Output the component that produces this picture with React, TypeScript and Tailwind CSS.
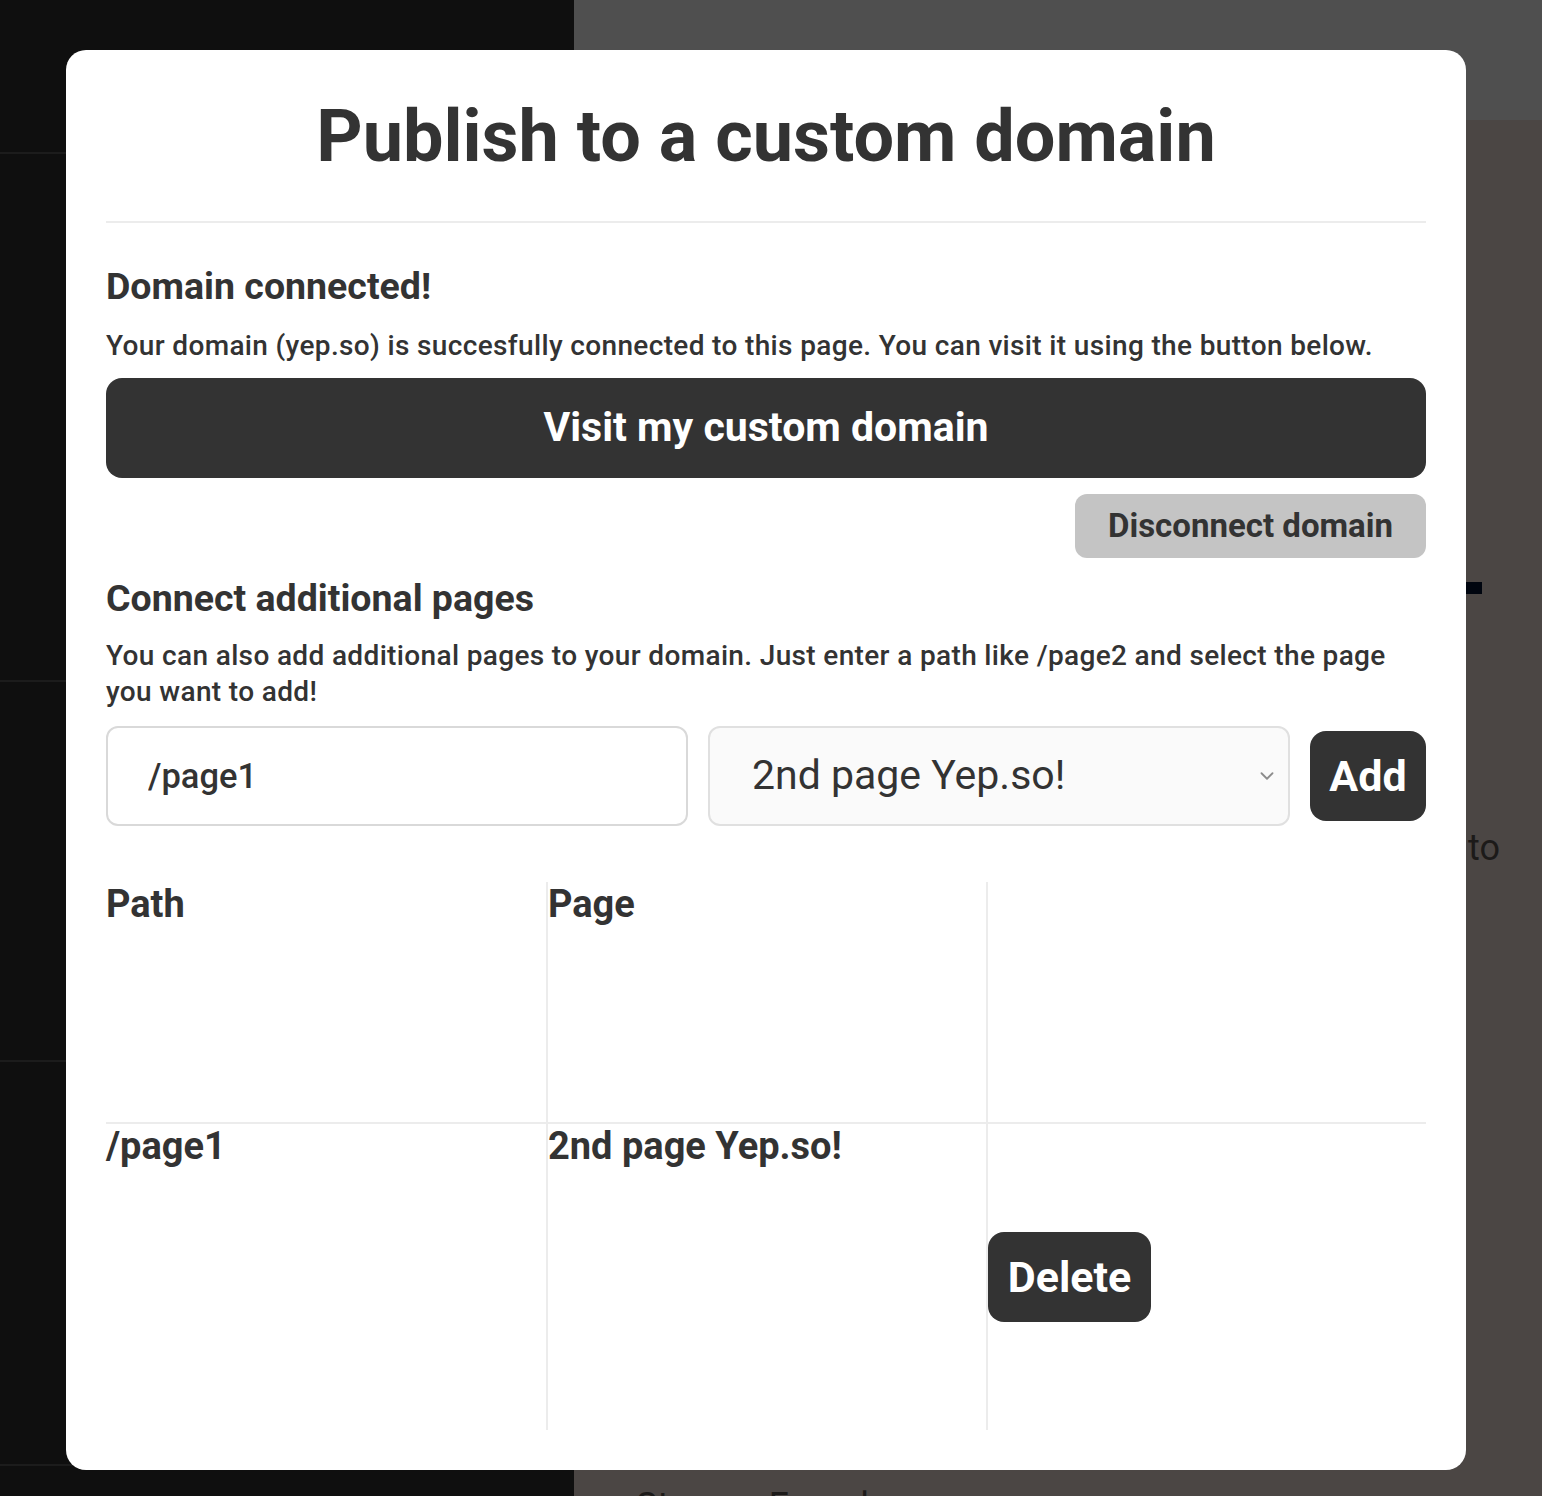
import { ChevronDown } from "lucide-react";

const rows = [
  { path: "/page1", page: "2nd page Yep.so!" },
];

export default function App() {
  return (
    <div className="relative flex h-[1496px] w-[1542px] overflow-hidden font-['Roboto','Liberation_Sans',sans-serif] text-[#333333]">
      <aside className="flex w-[574px] flex-col bg-[#0f0f0f]">
        <div className="h-[154px] border-b-2 border-[#1c1c1c]" />
        <div className="h-[528px] border-b-2 border-[#1c1c1c]" />
        <div className="h-[380px] border-b-2 border-[#1c1c1c]" />
        <div className="h-[404px] border-b-2 border-[#1c1c1c]" />
      </aside>

      <main className="flex flex-1 flex-col">
        <div className="h-[120px] bg-[#4f4f4f]" />
        <div className="flex flex-1 flex-col bg-[#4b4644]">
          <div className="ml-[892px] mt-[462px] h-[12px] w-[16px] bg-[#00050f]" />
          <p className="ml-[894px] mt-[234px] text-[36px] leading-[40px] text-[#1c1a19]">
            to
          </p>
          <p className="ml-[62px] mt-auto translate-y-[30px] text-[36px] leading-[40px] text-[#1c1a19]">
            Storage Foundry
          </p>
        </div>
      </main>

      <div className="absolute left-[66px] top-[50px] flex h-[1420px] w-[1400px] flex-col rounded-[20px] bg-white px-10 pt-[44px]">
        <h1 className="text-center text-[72px] font-bold leading-[86px]">
          Publish to a custom domain
        </h1>

        <div className="mt-[41px] h-[2px] bg-[#ececec]" />

        <h2 className="mt-[43px] text-[37.5px] font-bold leading-[40px]">
          Domain connected!
        </h2>
        <p className="mt-[22px] text-[28px] font-medium leading-[36px] tracking-[0.35px]">
          Your domain (yep.so) is succesfully connected to this page. You can
          visit it using the button below.
        </p>

        <button
          type="button"
          className="mt-[14px] h-[100px] rounded-[16px] bg-[#333333] text-[41px] font-bold text-white"
        >
          Visit my custom domain
        </button>

        <div className="mt-[16px] flex justify-end">
          <button
            type="button"
            className="h-[64px] w-[351px] rounded-[12px] bg-[#c4c4c4] text-[33px] font-bold text-[#333333]"
          >
            Disconnect domain
          </button>
        </div>

        <h2 className="mt-[20px] text-[37.5px] font-bold leading-[40px]">
          Connect additional pages
        </h2>
        <p className="mt-[20px] text-[28px] font-medium leading-[36px] tracking-[0.35px]">
          You can also add additional pages to your domain. Just enter a path
          like /page2 and select the page you want to add!
        </p>

        <div className="mt-[16px] flex items-center gap-5">
          <input
            defaultValue="/page1"
            className="h-[100px] w-[582px] rounded-[12px] border-2 border-[#d9d9d9] bg-white pl-[40px] text-[34.5px] font-medium text-[#333333] outline-none"
          />
          <div className="relative">
            <select
              defaultValue="2nd"
              className="h-[100px] w-[582px] appearance-none rounded-[12px] border-2 border-[#e0e0e0] bg-[#fafafa] pl-[42px] text-[41px] text-[#333333] outline-none"
            >
              <option value="2nd">2nd page Yep.so!</option>
            </select>
            <ChevronDown
              size={22}
              strokeWidth={2}
              className="pointer-events-none absolute right-[12px] top-[39px] text-[#8c8c8c]"
            />
          </div>
          <button
            type="button"
            className="h-[90px] w-[116px] rounded-[16px] bg-[#333333] text-[43px] font-bold text-white"
          >
            Add
          </button>
        </div>

        <div className="mt-[56px] grid grid-cols-3">
          <div className="h-[240px] text-[38px] font-bold leading-[44px]">
            Path
          </div>
          <div className="h-[240px] border-l-2 border-[#ececec] text-[38px] font-bold leading-[44px]">
            Page
          </div>
          <div className="h-[240px] border-l-2 border-[#ececec]" />

          {rows.map((row) => (
            <div key={row.path} className="contents">
              <div className="h-[308px] border-t-2 border-[#ececec] text-[38px] font-bold leading-[44px]">
                {row.path}
              </div>
              <div className="h-[308px] border-l-2 border-t-2 border-[#ececec] text-[38px] font-bold leading-[44px]">
                {row.page}
              </div>
              <div className="flex h-[308px] items-center border-l-2 border-t-2 border-[#ececec]">
                <button
                  type="button"
                  className="h-[90px] w-[163px] rounded-[16px] bg-[#333333] text-[43px] font-bold text-white"
                >
                  Delete
                </button>
              </div>
            </div>
          ))}
        </div>
      </div>
    </div>
  );
}
